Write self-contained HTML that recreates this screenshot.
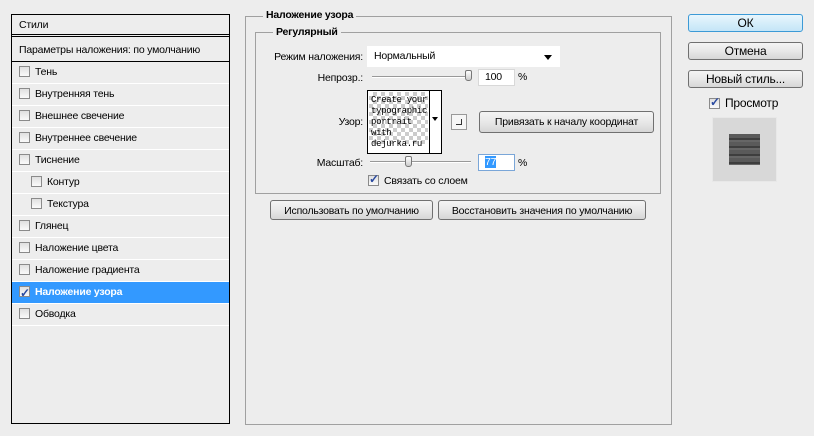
<!DOCTYPE html><html><head><meta charset="utf-8"><style>
*{box-sizing:border-box}
body{margin:0;width:814px;height:436px;background:#ededed;font-family:"Liberation Sans",sans-serif;font-size:10.5px;letter-spacing:-0.2px;color:#000;position:relative;overflow:hidden}
.a{position:absolute}
.r{position:absolute;text-align:right;width:120px}
.lp{left:11px;top:14px;width:219px;height:410px;border:1px solid #000;background:#ededed}
.row{position:absolute;left:0;width:217px;height:22px;line-height:21px;border-bottom:1px solid #fff;padding-left:7px}
.cb{display:inline-block;width:11px;height:11px;border:1px solid #8a8a8a;background:linear-gradient(#e0e0e0,#fafafa);vertical-align:-2px;margin-right:5px;position:relative}
.ck::after{content:"✓";position:absolute;left:0px;top:-4px;font-size:12px;color:#2a4aa0;font-weight:bold}
.btn{position:absolute;border:1px solid #707070;border-radius:3px;background:linear-gradient(#f4f4f4 0%,#e8e8e8 50%,#d6d6d6 100%);text-align:center}
.inp{position:absolute;background:#fff;border:1px solid #d8d8d8;padding-left:6px;line-height:15px}
.track{position:absolute;height:2px;border-top:1px solid #999;border-bottom:1px solid #fff}
.thumb{position:absolute;width:7px;height:11px;border:1px solid #777;border-radius:2px 2px 3px 3px;background:linear-gradient(#fff,#ccc)}
</style></head><body>
<div class="a lp">
<div class="row" style="top:0;height:22px;border-bottom:3px double #000">Стили</div>
<div class="row" style="top:25px;border-bottom:1px solid #000;height:22px">Параметры наложения: по умолчанию</div>
<div class="row" style="top:47px"><span class="cb"></span>Тень</div>
<div class="row" style="top:69px"><span class="cb"></span>Внутренняя тень</div>
<div class="row" style="top:91px"><span class="cb"></span>Внешнее свечение</div>
<div class="row" style="top:113px"><span class="cb"></span>Внутреннее свечение</div>
<div class="row" style="top:135px"><span class="cb"></span>Тиснение</div>
<div class="row" style="top:157px;padding-left:19px"><span class="cb"></span>Контур</div>
<div class="row" style="top:179px;padding-left:19px"><span class="cb"></span>Текстура</div>
<div class="row" style="top:201px"><span class="cb"></span>Глянец</div>
<div class="row" style="top:223px"><span class="cb"></span>Наложение цвета</div>
<div class="row" style="top:245px"><span class="cb"></span>Наложение градиента</div>
<div class="row" style="top:267px;background:#3399ff;color:#fff;font-weight:bold"><span class="cb ck"></span>Наложение узора</div>
<div class="row" style="top:289px"><span class="cb"></span>Обводка</div>
</div>

<div class="a" style="left:245px;top:16px;width:427px;height:409px;border:1px solid #a0a0a0"></div>
<div class="a" style="left:263px;top:9px;background:#ededed;padding:0 3px;font-weight:bold">Наложение узора</div>
<div class="a" style="left:255px;top:32px;width:406px;height:162px;border:1px solid #a0a0a0"></div>
<div class="a" style="left:273px;top:26px;background:#ededed;padding:0 3px;font-weight:bold">Регулярный</div>

<div class="r" style="left:243px;top:51px">Режим наложения:</div>
<div class="inp" style="left:367px;top:46px;width:193px;height:21px;line-height:19px;border-color:#fff">Нормальный</div>
<div class="a" style="left:544px;top:55px;width:0;height:0;border:4px solid transparent;border-top:5px solid #000"></div>

<div class="r" style="left:243px;top:72px">Непрозр.:</div>
<div class="track" style="left:372px;top:76px;width:100px"></div>
<div class="thumb" style="left:465px;top:70px"></div>
<div class="inp" style="left:478px;top:69px;width:37px;height:17px">100</div>
<div class="a" style="left:518px;top:71px">%</div>

<div class="r" style="left:243px;top:116px">Узор:</div>
<div class="a" style="left:367px;top:90px;width:75px;height:64px;border:1px solid #000;background:#fff"></div>
<div class="a" style="left:369px;top:92px;width:59px;height:52px;background-color:#fff;background-image:linear-gradient(45deg,#ccc 25%,transparent 25%,transparent 75%,#ccc 75%),linear-gradient(45deg,#ccc 25%,transparent 25%,transparent 75%,#ccc 75%);background-size:8px 8px;background-position:0 0,4px 4px;font-size:9px;line-height:11px;letter-spacing:-0.3px;padding-left:2px;padding-top:3px;font-family:'Liberation Mono',monospace">Create your typographic portrait with dejurka.ru</div>
<div class="a" style="left:429px;top:90px;width:1px;height:64px;background:#000"></div>
<div class="a" style="left:432px;top:117px;width:0;height:0;border:3px solid transparent;border-top:4px solid #000"></div>
<div class="a" style="left:451px;top:114px;width:16px;height:16px;border:1px solid #999;background:#f6f6f6"><div class="a" style="left:4px;top:4px;width:6px;height:6px;border:1px solid #333;border-left:none;border-top:none"></div></div>
<div class="btn" style="left:479px;top:111px;width:175px;height:22px;line-height:21px">Привязать к началу координат</div>

<div class="r" style="left:243px;top:157px">Масштаб:</div>
<div class="track" style="left:370px;top:161px;width:101px"></div>
<div class="thumb" style="left:405px;top:156px"></div>
<div class="inp" style="left:478px;top:154px;width:37px;height:17px;border-color:#7aa6d8"><span style="background:#3399ff;color:#fff">77</span></div>
<div class="a" style="left:518px;top:157px">%</div>
<div class="a" style="left:368px;top:175px"><span class="cb ck"></span>Связать со слоем</div>

<div class="btn" style="left:270px;top:200px;width:163px;height:20px;line-height:20px">Использовать по умолчанию</div>
<div class="btn" style="left:438px;top:200px;width:208px;height:20px;line-height:20px">Восстановить значения по умолчанию</div>

<div class="btn" style="left:688px;top:14px;width:115px;height:18px;line-height:17px;font-size:12px;border-color:#3c9ad6;background:linear-gradient(#e8f6fd,#c4e5f7)">ОК</div>
<div class="btn" style="left:688px;top:42px;width:115px;height:18px;line-height:17px;font-size:12px">Отмена</div>
<div class="btn" style="left:688px;top:70px;width:115px;height:18px;line-height:17px;font-size:12px">Новый стиль...</div>
<div class="a" style="left:709px;top:96px;font-size:12px"><span class="cb ck"></span>Просмотр</div>
<div class="a" style="left:712px;top:117px;width:65px;height:65px;background:#d8d8d8;border:1px solid #e8e8e8"></div>
<div class="a" style="left:729px;top:134px;width:31px;height:31px;background-color:#5a5a5a;background-image:repeating-linear-gradient(#5a5a5a 0 4px,#3e3e3e 4px 6px,#666 6px 8px)"></div>
</body></html>
